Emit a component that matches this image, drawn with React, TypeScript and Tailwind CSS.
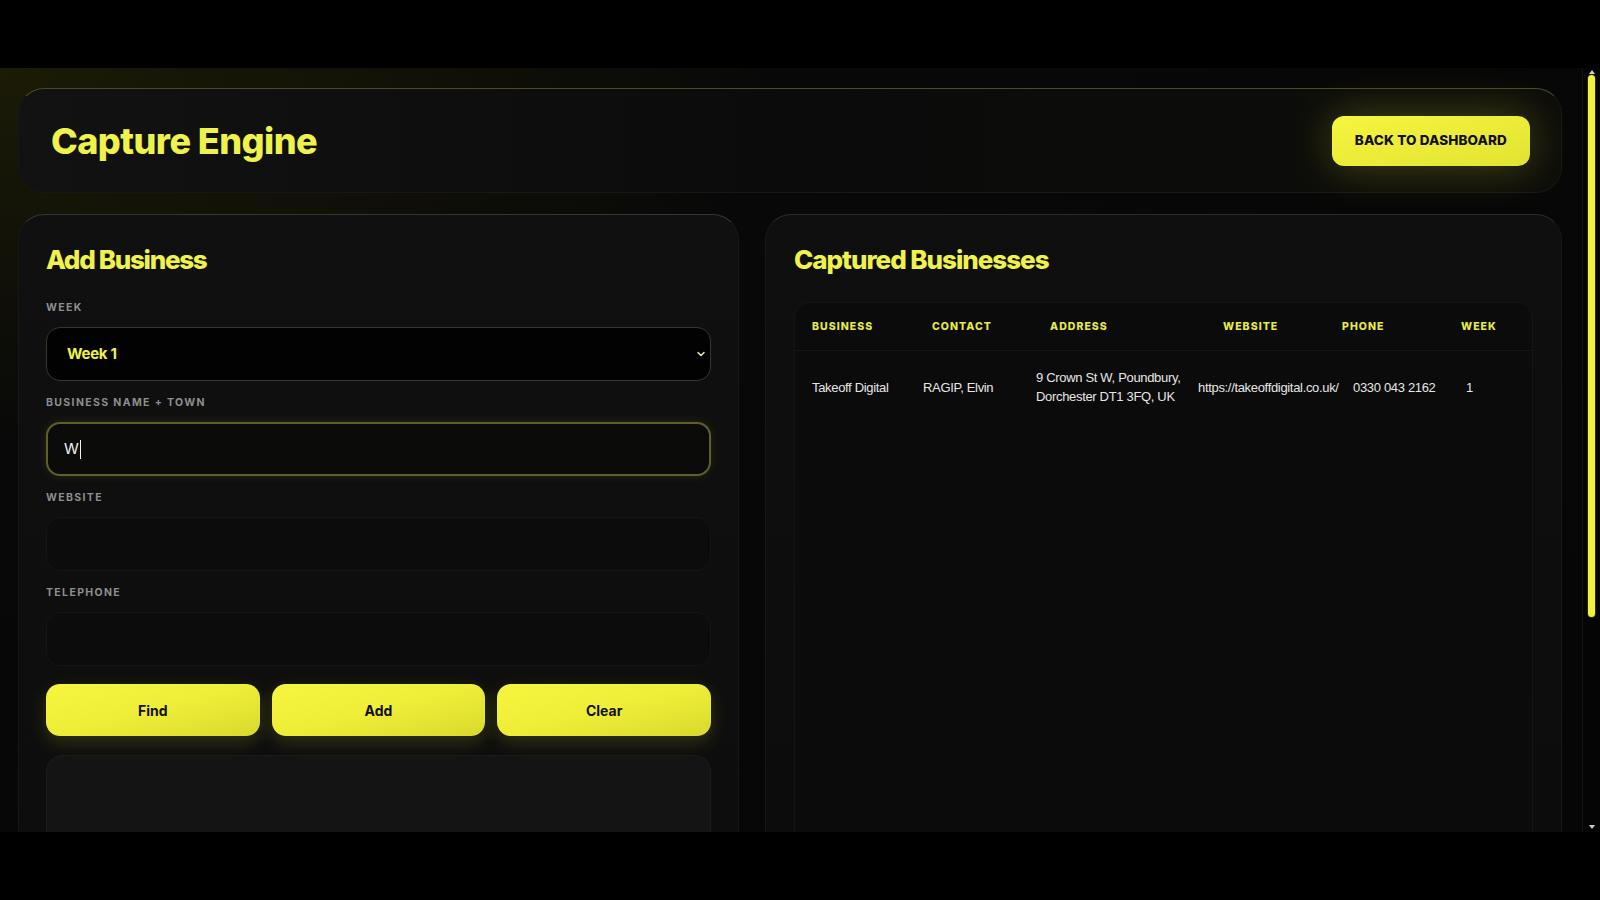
import { ChevronDown } from 'lucide-react';

const heading = "font-['Inter',sans-serif] font-extrabold text-[#eef24a]";
const label = "h-[14px] font-['Inter',sans-serif] text-[10.5px] leading-[14px] font-bold tracking-[0.13em] text-[#8e8e8e] uppercase";
const yellowBtn =
  "h-[52px] rounded-[14px] bg-gradient-to-br from-[#f6f63f] via-[#eeee38] to-[#d9d92e] font-['Inter',sans-serif] text-[14px] font-bold text-[#111] shadow-[0_6px_18px_rgba(230,230,50,0.18)]";

const headCols = [
  { name: 'Business', w: 'w-[120px]' },
  { name: 'Contact', w: 'w-[118px]' },
  { name: 'Address', w: 'w-[173px]' },
  { name: 'Website', w: 'w-[119px]' },
  { name: 'Phone', w: 'w-[119px]' },
  { name: 'Week', w: 'flex-1' },
];

function Field({ title, children }: { title: string; children: React.ReactNode }) {
  return (
    <div className="flex flex-col">
      <div className={label + ' mb-[12px]'}>{title}</div>
      {children}
    </div>
  );
}

function Scrollbar() {
  return (
    <div className="w-[18px] flex flex-col items-center bg-[#050505] border-l border-[#141414]">
      <div className="mt-[2px] h-0 w-0 border-x-[3px] border-b-[4px] border-x-transparent border-b-[#cfcfcf]" />
      <div className="mt-[1px] h-[542px] w-[7px] rounded-full bg-[#f2f23c] ring-1 ring-[#2a2a10]" />
      <div className="flex-1" />
      <div className="mb-[3px] h-0 w-0 border-x-[3px] border-t-[4px] border-x-transparent border-t-[#cfcfcf]" />
    </div>
  );
}

export default function App() {
  return (
    <div className="w-[1600px] h-[900px] bg-black flex flex-col overflow-hidden">
      {/* top band */}
      <div className="h-[68px] shrink-0 bg-black" />

      <div className="h-[764px] shrink-0 flex">
        <main className="flex-1 overflow-hidden pl-[18px] pr-[20px] pt-[20px] bg-[radial-gradient(ellipse_at_top_left,#1b1b07_0%,#080808_35%,#060606_100%)]">
          {/* Header */}
          <header className="h-[105px] flex items-center justify-between pl-[32px] pr-[31px] rounded-[26px] border border-[#171717] border-t-[#4a4a26] bg-gradient-to-r from-[#121212] via-[#0b0b0b] to-[#0d0d0a]">
            <h1 className={heading + ' text-[36px] leading-none tracking-[-0.015em]'}>Capture Engine</h1>
            <button className="h-[50px] px-[23px] rounded-[12px] bg-gradient-to-br from-[#f6f63f] to-[#e2e232] font-['Inter',sans-serif] text-[13.5px] font-extrabold tracking-[0.01em] text-[#111] shadow-[0_0_44px_rgba(230,230,50,0.28)]">
              BACK TO DASHBOARD
            </button>
          </header>

          <div className="mt-[21px] grid grid-cols-[721px_1fr] gap-[26px]">
            {/* Add Business */}
            <section className="h-[640px] rounded-[26px] border border-[#171717] border-t-[#353535] bg-gradient-to-b from-[#101010] to-[#0d0d0d] px-[27px] pt-[29px]">
              <h2 className={heading + ' text-[26px] leading-[32px] tracking-[-0.05em]'}>Add Business</h2>

              <div className="mt-[25px] flex flex-col gap-[15px]">
                <Field title="Week">
                  <div className="relative">
                    <select className="w-full h-[54px] appearance-none rounded-[14px] border border-[#37372a] bg-[#020202] pl-[20px] font-['Inter',sans-serif] text-[15px] font-bold tracking-[-0.02em] text-[#eef24a] outline-none">
                      <option>Week 1</option>
                      <option>Week 2</option>
                    </select>
                    <ChevronDown className="absolute right-[4px] top-[21px] h-[12px] w-[12px] text-[#e8e8c0]" strokeWidth={3} />
                  </div>
                </Field>

                <Field title="Business Name + Town">
                  <div className="h-[54px] flex items-center rounded-[14px] border-2 border-[#5f5f2c] bg-[#0b0b0a] pl-[16px] shadow-[0_0_10px_rgba(220,220,60,0.12)]">
                    <span className="font-['Inter',sans-serif] text-[15px] text-[#f2f2f2]">W</span>
                    <span className="ml-[1px] h-[19px] w-[1px] bg-[#f2f2f2]" />
                  </div>
                </Field>

                <Field title="Website">
                  <div className="h-[54px] rounded-[14px] border border-[#151515] bg-[#0c0c0c]" />
                </Field>

                <Field title="Telephone">
                  <div className="h-[54px] rounded-[14px] border border-[#151515] bg-[#0c0c0c]" />
                </Field>
              </div>

              <div className="mt-[18px] grid grid-cols-3 gap-[12px]">
                <button className={yellowBtn}>Find</button>
                <button className={yellowBtn}>Add</button>
                <button className={yellowBtn}>Clear</button>
              </div>

              <div className="mt-[19px] h-[120px] rounded-[16px] border border-[#1b1b1b] bg-[#141414]" />
            </section>

            {/* Captured Businesses */}
            <section className="h-[640px] rounded-[26px] border border-[#171717] border-t-[#2a2a2a] bg-gradient-to-b from-[#0f0f0f] to-[#0c0c0c] pl-[28px] pr-[28px] pt-[29px]">
              <h2 className={heading + ' text-[26px] leading-[32px] tracking-[-0.04em]'}>Captured Businesses</h2>

              <div className="mt-[26px] h-[560px] rounded-[16px] border border-[#151515] bg-[#0b0b0b]">
                <div className="h-[48px] flex items-center pl-[17px] border-b border-[#151515]">
                  {headCols.map((c) => (
                    <div
                      key={c.name}
                      className={c.w + " font-['Inter',sans-serif] text-[10.5px] font-extrabold tracking-[0.1em] uppercase text-[#e6ea44]"}
                    >
                      {c.name}
                    </div>
                  ))}
                </div>

                <div className="h-[72px] flex items-center pl-[17px] font-['Liberation_Sans',Arial,sans-serif] text-[13px] leading-[19px] tracking-[-0.025em] text-[#e6e6e6]">
                  <div className="w-[111px]">Takeoff Digital</div>
                  <div className="w-[113px]">RAGIP, Elvin</div>
                  <div className="w-[162px]">
                    9 Crown St W, Poundbury,
                    <br />
                    Dorchester DT1 3FQ, UK
                  </div>
                  <div className="w-[155px]">https://takeoffdigital.co.uk/</div>
                  <div className="w-[113px]">0330 043 2162</div>
                  <div className="flex-1">1</div>
                </div>
              </div>
            </section>
          </div>
        </main>

        <Scrollbar />
      </div>

      {/* bottom band */}
      <div className="flex-1 bg-black" />
    </div>
  );
}
